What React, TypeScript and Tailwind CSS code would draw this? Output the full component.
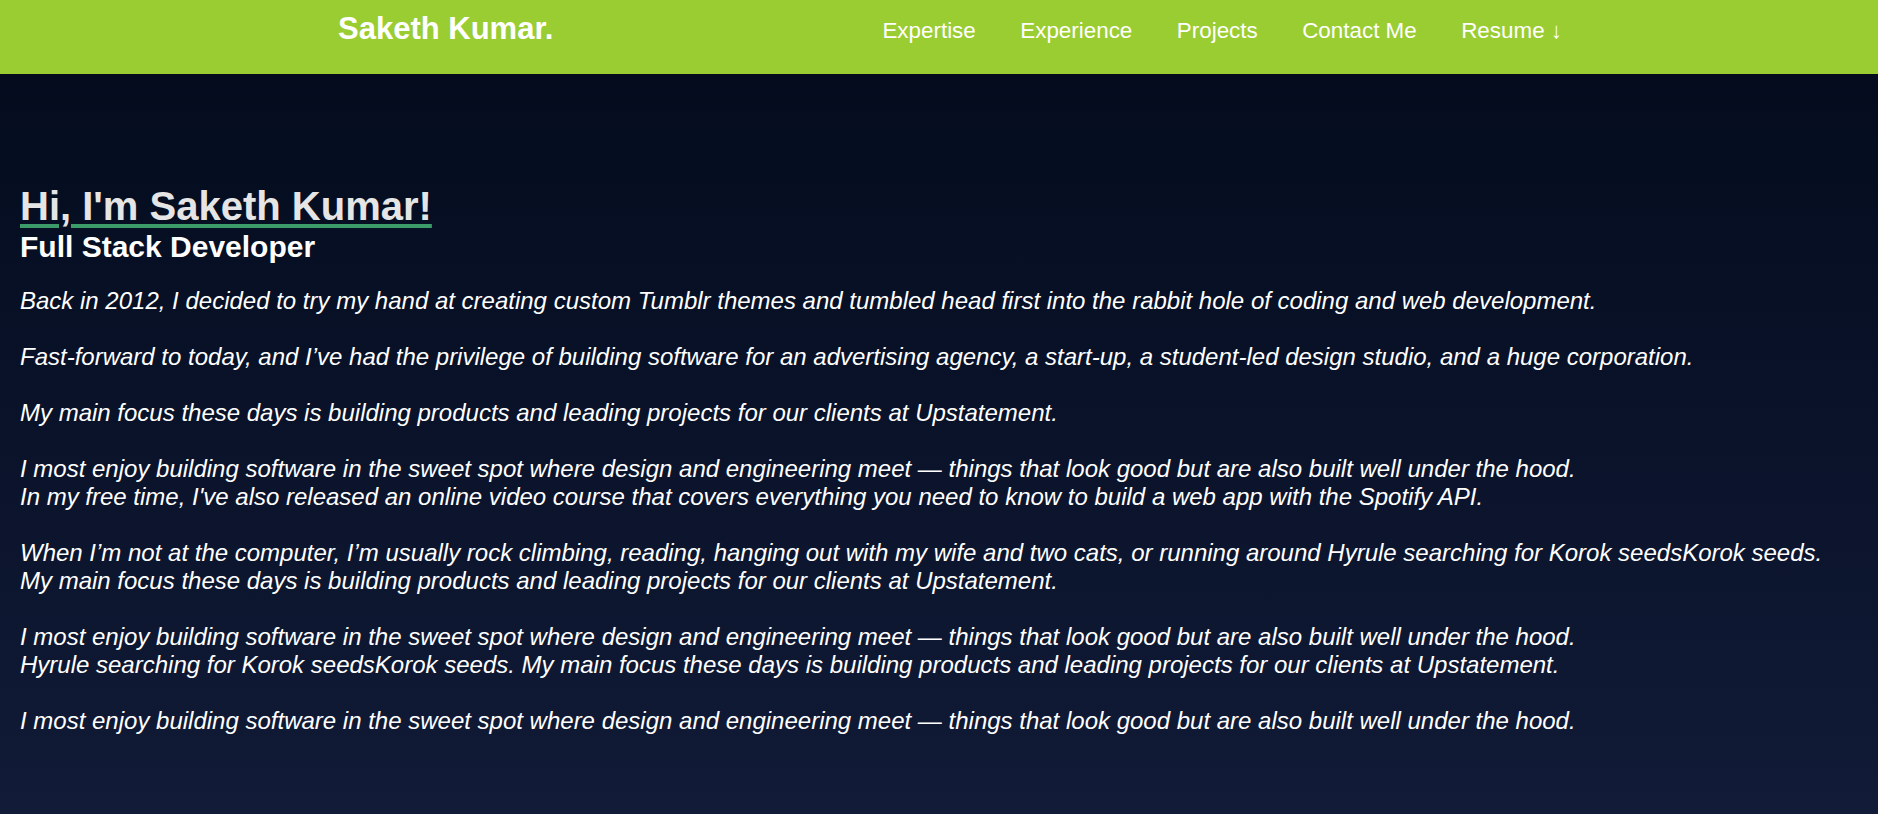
const navLinks = ['Expertise', 'Experience', 'Projects', 'Contact Me', 'Resume ↓'];

const lines: (string | null)[] = [
  'Back in 2012, I decided to try my hand at creating custom Tumblr themes and tumbled head first into the rabbit hole of coding and web development.',
  null,
  'Fast-forward to today, and I’ve had the privilege of building software for an advertising agency, a start-up, a student-led design studio, and a huge corporation.',
  null,
  'My main focus these days is building products and leading projects for our clients at Upstatement.',
  null,
  'I most enjoy building software in the sweet spot where design and engineering meet — things that look good but are also built well under the hood.',
  "In my free time, I've also released an online video course that covers everything you need to know to build a web app with the Spotify API.",
  null,
  'When I’m not at the computer, I’m usually rock climbing, reading, hanging out with my wife and two cats, or running around Hyrule searching for Korok seedsKorok seeds.',
  'My main focus these days is building products and leading projects for our clients at Upstatement.',
  null,
  'I most enjoy building software in the sweet spot where design and engineering meet — things that look good but are also built well under the hood.',
  'Hyrule searching for Korok seedsKorok seeds. My main focus these days is building products and leading projects for our clients at Upstatement.',
  null,
  'I most enjoy building software in the sweet spot where design and engineering meet — things that look good but are also built well under the hood.',
];

const Header = () => (
  <header className="flex h-[74px] items-start justify-between bg-[#9acd32] pl-[338px] pr-[316px] text-white">
    <a href="#" className="mt-[6px] text-[31px] font-bold">
      Saketh Kumar.
    </a>
    <nav className="mt-[14px] flex gap-[44.5px] text-[22.4px]">
      {navLinks.map((link) => (
        <a key={link} href="#">
          {link}
        </a>
      ))}
    </nav>
  </header>
);

const About = () => (
  <section className="px-[20px] pt-[109px] pb-[80px]">
    <h1 className="text-[40px] font-bold leading-[1.15] text-[#e5e5e5] underline decoration-[#3b9c69] decoration-4 underline-offset-4">
      Hi, I'm Saketh Kumar!
    </h1>
    <h2 className="mt-[1px] text-[30px] font-bold leading-[1.15] text-white">
      Full Stack Developer
    </h2>
    <p className="mt-[22px] text-[24px] italic leading-[28px] text-white">
      {lines.map((line, i) =>
        line === null ? <br key={i} /> : (
          <span key={i}>
            {line}
            <br />
          </span>
        )
      )}
    </p>
  </section>
);

export default function App() {
  return (
    <div className="min-h-[814px] bg-gradient-to-b from-[#030a1b] to-[#121b37] font-['Liberation_Sans',Arial,sans-serif]">
      <Header />
      <About />
    </div>
  );
}
